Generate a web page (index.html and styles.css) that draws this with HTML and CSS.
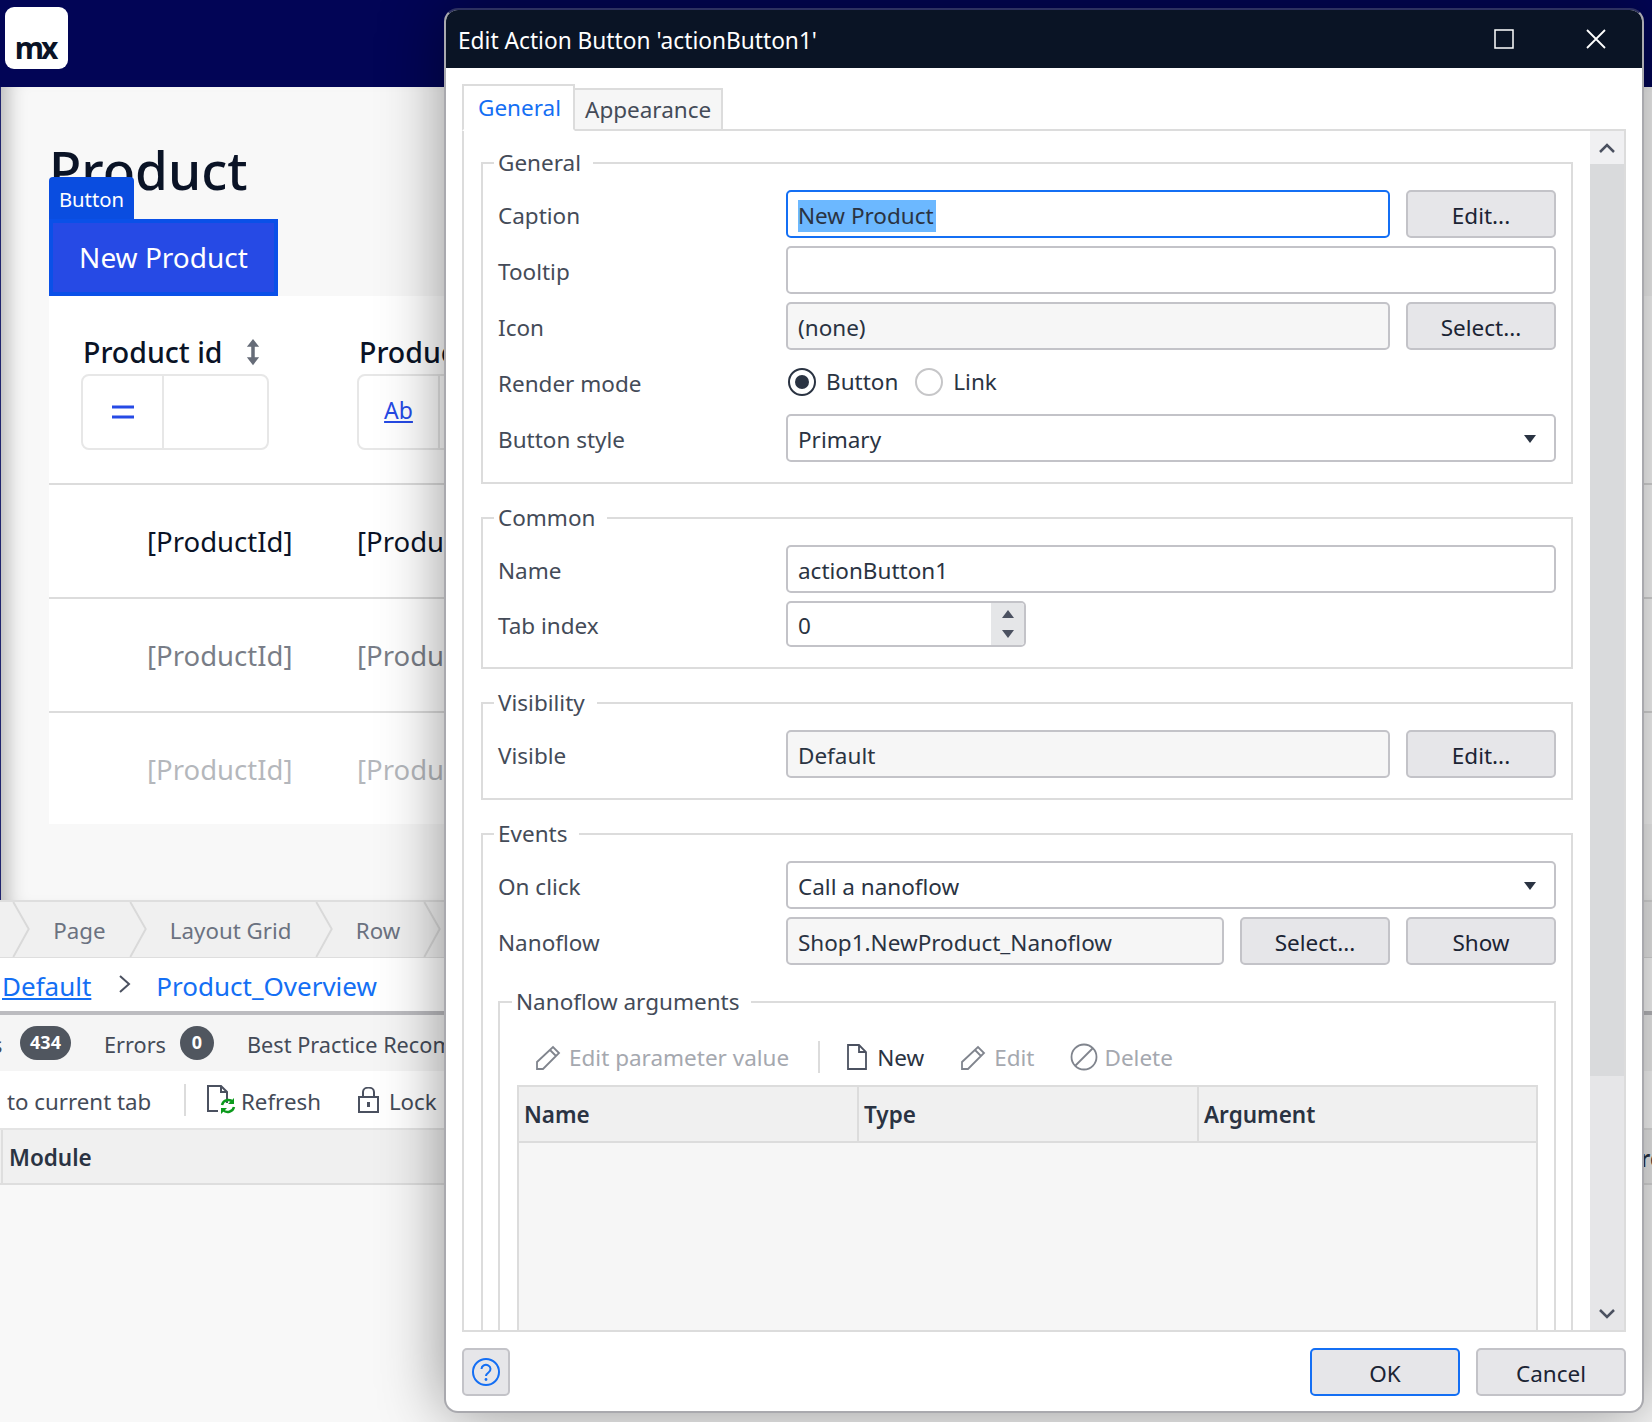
FILE: index.html
```html
<!DOCTYPE html>
<html>
	<head>
		<meta charset="UTF-8">
		<title>Edit Action Button</title>
		<link rel="stylesheet" href="styles.css">
	</head>
	<body>
		<div class="topbar">
			<div class="logo">mx</div>
		</div>

		<div class="page">
			<h1 class="title">Product</h1>
			<div class="btn-wrap">
				<div class="btn-tag">Button</div>
				<div class="new-btn">New Product</div>
			</div>
			<div class="grid">
				<div class="grid-head">
					<div class="col-head">
						<div class="col-title">Product id
							<svg class="sort" width="14" height="28" viewBox="0 0 16 30"><path d="M8 0L15 9H10V21H15L8 30L1 21H6V9H1Z" fill="#666c78"/></svg>
						</div>
						<div class="filter">
							<div class="filter-op"><svg width="22" height="14" viewBox="0 0 22 14"><path d="M0 2H22M0 12H22" stroke="#264ae5" stroke-width="3"/></svg></div>
						</div>
					</div>
					<div class="col-head">
						<div class="col-title">Product name</div>
						<div class="filter">
							<div class="filter-op"><span class="ab">Ab</span></div>
						</div>
					</div>
				</div>
				<div class="grid-row"><span>[ProductId]</span><span>[ProductName]</span></div>
				<div class="grid-row row-fade1"><span>[ProductId]</span><span>[ProductName]</span></div>
				<div class="grid-row row-fade2"><span>[ProductId]</span><span>[ProductName]</span></div>
			</div>
		</div>

		<div class="crumbs">
			<svg class="crumb-sep" width="18" height="57" viewBox="0 0 18 57"><path d="M1 0L17 28L1 57" fill="none" stroke="#d9d9d9" stroke-width="2"/></svg>
			<span class="crumb">Page</span>
			<svg class="crumb-sep" width="18" height="57" viewBox="0 0 18 57"><path d="M1 0L17 28L1 57" fill="none" stroke="#d9d9d9" stroke-width="2"/></svg>
			<span class="crumb">Layout Grid</span>
			<svg class="crumb-sep" width="18" height="57" viewBox="0 0 18 57"><path d="M1 0L17 28L1 57" fill="none" stroke="#d9d9d9" stroke-width="2"/></svg>
			<span class="crumb">Row</span>
			<svg class="crumb-sep" width="18" height="57" viewBox="0 0 18 57"><path d="M1 0L17 28L1 57" fill="none" stroke="#d9d9d9" stroke-width="2"/></svg>
		</div>

		<div class="path-row">
			<a class="path-link under">Default</a>
			<svg class="path-sep" width="12" height="18" viewBox="0 0 12 18"><path d="M1 1L10 9L1 17" fill="none" stroke="#4b5160" stroke-width="2"/></svg>
			<a class="path-link">Product_Overview</a>
		</div>

		<div class="errors-tabs">
			<span class="cut-s err-text">s</span>
			<span class="badge wide">434</span>
			<span class="err-label err-text">Errors</span>
			<span class="badge">0</span>
			<span class="err-label best err-text">Best Practice Recommendations</span>
		</div>

		<div class="err-tools">
			<span class="tool-first">to current tab</span>
			<span class="tool-div"></span>
			<svg class="ico-refresh" width="29" height="29" viewBox="0 0 29 29">
				<path d="M20 18V7L14 1H1V26H11M14 1V7H20" fill="none" stroke="#4b5160" stroke-width="2"/>
				<path d="M15 20a6.500 6.500 0 0 1 11-3M27 22a6.500 6.500 0 0 1-11 3" fill="none" stroke="#0c9a1c" stroke-width="2.500"/>
				<path d="M27 13V19H21ZM14 29V23H20Z" fill="#0c9a1c"/>
			</svg>
			<span>Refresh</span>
			<svg class="ico-lock" width="21" height="26" viewBox="0 0 21 26">
				<path d="M1 10H20V25H1ZM5 10V5a5 4 0 0 1 11 0V10" fill="none" stroke="#4b5160" stroke-width="2"/>
				<path d="M10.500 15V20" stroke="#4b5160" stroke-width="3"/>
			</svg>
			<span>Lock</span>
		</div>

		<div class="err-head">
			<span class="err-module">Module</span>
			<span class="err-source">Source</span>
		</div>

		<div class="modal">
			<div class="modal-title">
				<span class="modal-name">Edit Action Button 'actionButton1'</span>
				<svg class="win-max" width="20" height="20" viewBox="0 0 20 20"><rect x="1" y="1" width="18" height="18" fill="none" stroke="#fff" stroke-width="1.500"/></svg>
				<svg class="win-close" width="20" height="20" viewBox="0 0 20 20"><path d="M1 1L19 19M19 1L1 19" stroke="#fff" stroke-width="1.800"/></svg>
			</div>

			<div class="modal-body">
				<div class="tabs">
					<div class="tab tab-on">General</div>
					<div class="tab">Appearance</div>
				</div>

				<div class="pane">
					<div class="pane-inner">
						<fieldset class="group">
							<legend>General</legend>
							<div class="form-row">
								<label>Caption</label>
								<div class="field focus"><span class="sel">New Product</span></div>
								<div class="btn">Edit...</div>
							</div>
							<div class="form-row">
								<label>Tooltip</label>
								<div class="field"></div>
							</div>
							<div class="form-row">
								<label>Icon</label>
								<div class="field ro">(none)</div>
								<div class="btn">Select...</div>
							</div>
							<div class="form-row">
								<label>Render mode</label>
								<div class="radios">
									<span class="radio on"></span><span class="radio-text">Button</span>
									<span class="radio"></span><span class="radio-text">Link</span>
								</div>
							</div>
							<div class="form-row">
								<label>Button style</label>
								<div class="field">Primary<span class="caret"></span></div>
							</div>
						</fieldset>

						<fieldset class="group">
							<legend>Common</legend>
							<div class="form-row">
								<label>Name</label>
								<div class="field">actionButton1</div>
							</div>
							<div class="form-row short">
								<label>Tab index</label>
								<div class="field spin">0
									<div class="spin-btns"><span class="up"></span><span class="down"></span></div>
								</div>
							</div>
						</fieldset>

						<fieldset class="group">
							<legend>Visibility</legend>
							<div class="form-row">
								<label>Visible</label>
								<div class="field ro">Default</div>
								<div class="btn">Edit...</div>
							</div>
						</fieldset>

						<fieldset class="group">
							<legend>Events</legend>
							<div class="form-row">
								<label>On click</label>
								<div class="field">Call a nanoflow<span class="caret"></span></div>
							</div>
							<div class="form-row">
								<label>Nanoflow</label>
								<div class="field ro">Shop1.NewProduct_Nanoflow</div>
								<div class="btn">Select...</div>
								<div class="btn">Show</div>
							</div>

							<fieldset class="group inner">
								<legend>Nanoflow arguments</legend>
								<div class="toolbar">
									<svg class="ico-pen" width="25" height="25" viewBox="0 0 25 25"><path d="M1 24V17L17 2L23 8L7 24ZM14 5L20 11" fill="none" stroke="#565c68" stroke-width="1.800"/></svg>
									<span class="muted pen-text">Edit parameter value</span>
									<span class="bar-div"></span>
									<svg class="ico-doc" width="20" height="26" viewBox="0 0 20 26"><path d="M1 1H12L19 8V25H1ZM12 1V8H19" fill="none" stroke="#4b5160" stroke-width="1.800"/></svg>
									<span class="new-text">New</span>
									<svg class="ico-pen2" width="25" height="25" viewBox="0 0 25 25"><path d="M1 24V17L17 2L23 8L7 24ZM14 5L20 11" fill="none" stroke="#565c68" stroke-width="1.800"/></svg>
									<span class="muted pen-text">Edit</span>
									<svg class="ico-del" width="28" height="28" viewBox="0 0 28 28"><circle cx="14" cy="14" r="12.500" fill="none" stroke="#565c68" stroke-width="1.800"/><path d="M5 23L23 5" stroke="#565c68" stroke-width="1.800"/></svg>
									<span class="muted del-text">Delete</span>
								</div>
								<div class="args">
									<div class="args-head">
										<div>Name</div>
										<div>Type</div>
										<div>Argument</div>
									</div>
									<div class="args-body"></div>
								</div>
							</fieldset>
						</fieldset>
					</div>

					<div class="scroll">
						<div class="scroll-up"><svg width="16" height="10" viewBox="0 0 16 10"><path d="M1 9L8 2L15 9" fill="none" stroke="#4b5160" stroke-width="2.500"/></svg></div>
						<div class="scroll-thumb"></div>
						<div class="scroll-rest"><svg width="16" height="10" viewBox="0 0 16 10"><path d="M1 1L8 8L15 1" fill="none" stroke="#4b5160" stroke-width="2.500"/></svg></div>
					</div>
				</div>

				<div class="modal-foot">
					<div class="btn help">
						<svg width="28" height="28" viewBox="0 0 28 28">
							<circle cx="14" cy="14" r="13" fill="none" stroke="#146ff4" stroke-width="2"/>
							<path d="M9.500 11a4.500 4.200 0 1 1 7 3.500c-1.600 1.100-2.500 1.800-2.500 3.500" fill="none" stroke="#146ff4" stroke-width="2"/>
							<circle cx="14" cy="21.500" r="1.400" fill="#146ff4"/>
						</svg>
					</div>
					<div class="foot-right">
						<div class="btn ok">OK</div>
						<div class="btn">Cancel</div>
					</div>
				</div>
			</div>
		</div>
	</body>
</html>
```

FILE: styles.css
```css
*{
	box-sizing: border-box;
}
html,body{
	margin:0;
	padding:0;
	height:1422px;
	overflow: hidden;
}
body{
	position: relative;
	width:1652px;
	background:#f8f8f8;
	font-family:"Noto Sans","Open Sans",sans-serif;
	color:#2a3342;
}

/* app behind the dialog */
.topbar{
	height:87px;
	background:#020556;
	padding:7px 5px;
}
.logo{
	width:63px;
	height:62px;
	background:#fff;
	border-radius:9px;
	color:#0a1326;
	font-size:30px;
	font-weight:700;
	letter-spacing:-3px;
	line-height:28px;
	display:flex;
	align-items:flex-end;
	justify-content:center;
	padding:0 3px 7px 0;
}
.page{
	height:813px;
	background:#f8f8f8;
	border-left:1px solid #20246e;
	box-shadow: inset 22px 0 20px -16px rgba(0,0,0,.28);
	padding-left:48px;
	color:#0a1326;
}
.title{
	margin:0;
	height:132px;
	padding-top:47px;
	font-size:53px;
	font-weight:500;
	line-height:72px;
}
.btn-wrap{
	position: relative;
}
.btn-tag{
	position: absolute;
	left:0;
	bottom:100%;
	width:85px;
	height:42px;
	background:#0a4de0;
	border-radius:4px 4px 0 0;
	color:#fff;
	font-size:20.300px;
	line-height:45px;
	text-align:center;
}
.new-btn{
	width:229px;
	height:77px;
	background:#264ae5;
	border:4px solid #0a50e8;
	color:#fff;
	font-size:28px;
	line-height:69px;
	text-align:center;
}
.grid{
	height:528px;
	background:#fff;
}
.grid-head{
	height:187px;
	display:grid;
	grid-template-columns:276px 1fr;
	padding-top:33px;
}
.col-head{
	padding-left:32px;
}
.col-title{
	font-size:28.500px;
	font-weight:500;
	line-height:38px;
	height:45px;
	display:flex;
	align-items:center;
	white-space:nowrap;
	padding-left:2px;
}
.sort{
	margin-left:23px;
}
.filter{
	width:188px;
	height:76px;
	border:2px solid #e7e7e7;
	border-radius:8px;
}
.filter-op{
	width:81px;
	height:100%;
	border-right:2px solid #e7e7e7;
	display:flex;
	align-items:center;
	justify-content:center;
}
.ab{
	color:#264ae5;
	font-size:23px;
	margin-top:-4px;
	text-decoration:underline;
}
.grid-row{
	height:114px;
	border-top:2px solid #dcdcdc;
	display:grid;
	grid-template-columns:308px 1fr;
	align-items:center;
	font-size:27.500px;
	white-space:nowrap;
}
.grid-row span:first-child{
	padding-left:98px;
}
.row-fade1 span{
	opacity:.55;
}
.row-fade2 span{
	opacity:.3;
}
.crumbs{
	height:58px;
	background:#f0f0f0;
	border-top:2px solid #dedede;
	border-bottom:1px solid #dedede;
	padding-left:12px;
	display:flex;
	align-items:center;
	color:#6b7280;
	font-size:22.300px;
}
.crumb{
	padding:2px 23.200px 0;
}
.crumb-sep{
	flex:none;
	height:55px;
}
.path-row{
	height:53px;
	background:#fff;
	padding:2px 0 0 2px;
	display:flex;
	align-items:center;
	font-size:26px;
}
.path-link{
	color:#146ff4;
}
.under{
	text-decoration:underline;
}
.path-sep{
	margin:-4px 25px 0 28px;
}
.errors-tabs{
	height:60px;
	background:#f5f5f5;
	border-top:4px solid #bcbcc0;
	display:flex;
	align-items:center;
	font-size:21.700px;
	white-space:nowrap;
	color:#444b58;
}
.err-text{
	padding-top:3px;
}
.cut-s{
	margin-left:-8px;
	width:28px;
	flex:none;
}
.badge{
	width:34px;
	height:34px;
	border-radius:17px;
	background:#50565f;
	color:#fff;
	font-size:18px;
	font-weight:700;
	line-height:32px;
	text-align:center;
	flex:none;
}
.wide{
	width:51px;
}
.err-label{
	margin:0 14px 0 33px;
}
.best{
	margin-left:33px;
}
.err-tools{
	height:57px;
	background:#fff;
	display:flex;
	align-items:center;
	font-size:22.300px;
	white-space:nowrap;
	color:#444b58;
	padding-left:7px;
}
.err-tools span{
	padding-top:3px;
}
.tool-first{
	width:177px;
}
.err-tools .tool-div{
	width:2px;
	height:32px;
	padding:0;
	background:#dcdcdc;
}
.ico-refresh{
	margin:0 5px 0 21px;
}
.ico-lock{
	margin:0 10px 0 37px;
}
.err-head{
	height:57px;
	background:#f0f0f0;
	border-top:2px solid #e4e4e4;
	border-bottom:2px solid #dedede;
	display:grid;
	grid-template-columns:1600px 1fr;
	align-items:center;
	font-size:22.500px;
	font-weight:600;
	color:#2a3342;
}
.err-module{
	padding:3px 0 0 6px;
	border-left:2px solid #dedede;
	margin-left:1px;
	line-height:50px;
}
.err-source{
	padding-top:3px;
	white-space:nowrap;
}

/* dialog */
.modal{
	position: absolute;
	left:444px;
	top:8px;
	width:1200px;
	height:1405px;
	background:#fff;
	border:2px solid #a9a9ae;
	border-top-color:#2d3160;
	border-radius:14px;
	box-shadow:0 0 64px rgba(0,0,0,.42);
	display:flex;
	flex-direction:column;
	overflow:hidden;
	font-size:22.500px;
}
.modal-title{
	height:58px;
	flex:none;
	background:#0a1425;
	color:#fff;
	display:flex;
	align-items:center;
	padding-left:12px;
}
.modal-name{
	flex:1;
	font-size:22.700px;
	padding-top:3px;
}
.win-max{
	margin-right:72px;
}
.win-close{
	margin-right:36px;
}
.modal-body{
	flex:1;
	padding:16px 16px 15px 16px;
	display:flex;
	flex-direction:column;
	min-height:0;
}
.tabs{
	display:flex;
	align-items:flex-end;
	height:47px;
	flex:none;
	margin-bottom:-2px;
	position:relative;
}
.tab{
	height:43px;
	border:2px solid #dcdcdc;
	border-left:0;
	background:#f6f6f6;
	padding:0 10px;
	line-height:40px;
	color:#444b58;
}
.tab-on{
	height:47px;
	width:113px;
	border-left:2px solid #dcdcdc;
	border-bottom:2px solid #fff;
	background:#fff;
	color:#146ff4;
	padding:0 14px;
	line-height:44px;
}
.pane{
	flex:1;
	min-height:0;
	border:2px solid #dcdcdc;
	display:flex;
	overflow:hidden;
}
.pane-inner{
	flex:1;
	min-width:0;
	padding:16px 17px 0 17px;
	overflow:hidden;
}
.group{
	margin:0 0 18px;
	padding:11px 15px 20px;
	border:2px solid #dcdcdc;
	min-width:0;
}
.group legend{
	margin-left:-4px;
	padding:0 12px 0 4px;
	line-height:32px;
	color:#444b58;
}
.inner{
	margin:21px 0 0;
	padding-left:17px;
	padding-right:16px;
}
.inner legend{
	margin-left:-5px;
}
.form-row{
	display:flex;
	align-items:center;
	gap:16px;
	height:48px;
	margin-bottom:8px;
}
.form-row:last-child{
	margin-bottom:0;
}
.short{
	height:46px;
}
.form-row label{
	width:272px;
	flex:none;
	padding-top:2px;
	color:#444b58;
}
.field{
	flex:1;
	height:100%;
	border:2px solid #c3c3c8;
	border-radius:5px;
	padding:0 10px;
	line-height:47px;
	position:relative;
	white-space:nowrap;
}
.focus{
	border-color:#146ff4;
}
.ro{
	background:#f6f6f6;
}
.sel{
	background:#6cb8ff;
	display:inline-block;
	line-height:32px;
	padding-right:2px;
}
.btn{
	width:150px;
	height:48px;
	flex:none;
	background:#e6e6e9;
	border:2px solid #c3c3c8;
	border-radius:5px;
	line-height:47px;
	text-align:center;
	color:#1b2434;
}
.caret{
	position:absolute;
	right:18px;
	top:19px;
	border-left:6px solid transparent;
	border-right:6px solid transparent;
	border-top:8px solid #2a3342;
}
.spin{
	flex:none;
	width:240px;
	overflow:hidden;
	line-height:45px;
}
.spin-btns{
	position:absolute;
	top:0;
	right:0;
	bottom:0;
	width:33px;
	background:#e5e6e8;
	display:flex;
	flex-direction:column;
	align-items:center;
	justify-content:center;
	gap:12px;
}
.up{
	border-left:6px solid transparent;
	border-right:6px solid transparent;
	border-bottom:8px solid #4b5160;
}
.down{
	border-left:6px solid transparent;
	border-right:6px solid transparent;
	border-top:8px solid #4b5160;
}
.radios{
	display:flex;
	align-items:center;
	padding-left:2px;
}
.radio{
	width:28px;
	height:28px;
	border:2px solid #c6c6c8;
	border-radius:50%;
	flex:none;
	position:relative;
}
.on{
	border-color:#2a3342;
}
.on::after{
	content:"";
	position:absolute;
	left:5px;
	top:5px;
	width:14px;
	height:14px;
	border-radius:50%;
	background:#2a3342;
}
.radio-text{
	margin:-1px 17px 0 10px;
}
.toolbar{
	height:56px;
	display:flex;
	align-items:center;
	white-space:nowrap;
	padding-left:19px;
}
.muted{
	color:#a5a8af;
}
.ico-pen,.ico-pen2,.ico-del{
	opacity:.75;
	flex:none;
}
.pen-text{
	margin-left:8px;
}
.bar-div{
	width:2px;
	height:32px;
	background:#dcdcdc;
	margin:0 27px 0 29px;
}
.new-text{
	margin-left:10px;
}
.ico-pen2{
	margin-left:37px;
}
.ico-del{
	margin-left:35px;
}
.del-text{
	margin-left:7px;
}
.args{
	border:2px solid #dcdcdc;
	height:400px;
	background:#f6f6f6;
	font-weight:600;
}
.args-head{
	height:56px;
	background:#f0f0f0;
	border-bottom:2px solid #dcdcdc;
	display:grid;
	grid-template-columns:338px 340px 1fr;
	line-height:56px;
}
.args-head div{
	padding-left:5px;
	border-left:2px solid #dcdcdc;
}
.args-head div:first-child{
	border-left:0;
}
.scroll{
	width:34px;
	flex:none;
	display:flex;
	flex-direction:column;
	background:#e6e6e8;
}
.scroll-up{
	height:33px;
	background:#f0f0f2;
	display:flex;
	align-items:center;
	justify-content:center;
}
.scroll-thumb{
	height:912px;
	background:#d9dadc;
}
.scroll-rest{
	flex:1;
	display:flex;
	align-items:flex-end;
	justify-content:center;
	padding-bottom:11px;
}
.modal-foot{
	flex:none;
	margin-top:16px;
	display:flex;
	justify-content:space-between;
}
.help{
	width:48px;
	display:flex;
	align-items:center;
	justify-content:center;
}
.foot-right{
	display:flex;
	gap:16px;
}
.ok{
	border-color:#146ff4;
}
```
